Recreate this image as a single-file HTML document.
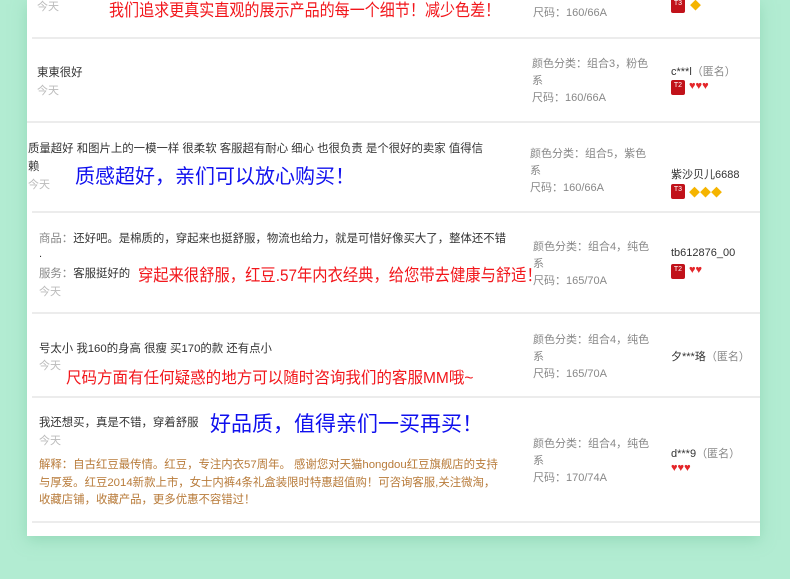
<!DOCTYPE html>
<html><head><meta charset="utf-8"><style>
body{margin:0;width:790px;height:579px;background:#b2ecd2;position:relative;overflow:hidden;font-family:"Liberation Sans","Noto Sans CJK SC",sans-serif;}
.panel{position:absolute;left:27px;top:0;width:733px;height:536px;background:#fff;box-shadow:0 4px 14px rgba(120,200,160,.5);}
.t{position:absolute;white-space:nowrap;font-size:11px;color:#333;}
.b{font-size:11.4px}
.g{color:#bbb;}
.m{color:#888;}
.hr{position:absolute;left:32px;width:728px;height:2px;background:#ececec;}
.big{position:absolute;white-space:nowrap;font-size:17px;transform-origin:left top;}
.red{color:#f2161b}.blue{color:#1010ee}
.tm{position:absolute;width:14px;height:15px;background:#c1121a;border-radius:2px;color:#fff;font-size:7px;text-align:center;line-height:12px;}
.h{position:absolute;font-size:11px;color:#e4262a;}
.d{position:absolute;font-size:11px;color:#f5b400;}
.o{color:#b87b3a}
</style></head><body>
<div class="panel"></div>
<div class="t g" style="left:37px;top:-2px">今天</div>
<div class="big red" style="left:109px;top:-4px;transform:scaleX(.885)">我们追求更真实直观的展示产品的每一个细节！减少色差！</div>
<div class="t m" style="left:533px;top:4px">尺码：160/66A</div>
<div class="tm" style="left:671px;top:-2px">T3</div><div class="d" style="left:690px;top:-3px">◆</div>
<div class="hr" style="top:37px"></div>

<div class="t b" style="left:37px;top:64px">東東很好</div>
<div class="t g" style="left:37px;top:82px">今天</div>
<div class="t m" style="left:532px;top:55px">颜色分类：组合3，粉色</div>
<div class="t m" style="left:532px;top:72px">系</div>
<div class="t m" style="left:532px;top:89px">尺码：160/66A</div>
<div class="t m" style="left:671px;top:63px"><span style="color:#333">c***l</span>（匿名）</div>
<div class="tm" style="left:671px;top:80px">T2</div><div class="h" style="left:689px;top:80px">♥♥♥</div>
<div class="hr" style="top:121px;left:27px;width:733px"></div>

<div class="t b" style="left:28px;top:140px">质量超好 和图片上的一模一样 很柔软 客服超有耐心 细心 也很负责 是个很好的卖家 值得信</div>
<div class="t b" style="left:28px;top:158px">赖</div>
<div class="t g" style="left:28px;top:176px">今天</div>
<div class="big blue" style="left:75px;top:160px;font-size:20px">质感超好，亲们可以放心购买！</div>
<div class="t m" style="left:530px;top:145px">颜色分类：组合5，紫色</div>
<div class="t m" style="left:530px;top:162px">系</div>
<div class="t m" style="left:530px;top:179px">尺码：160/66A</div>
<div class="t" style="left:671px;top:166px">紫沙贝儿6688</div>
<div class="tm" style="left:671px;top:184px">T3</div><div class="d" style="left:689px;top:184px">◆◆◆</div>
<div class="hr" style="top:211px"></div>

<div class="t m b" style="left:39px;top:230px">商品：<span style="color:#333">还好吧。是棉质的，穿起来也挺舒服，物流也给力，就是可惜好像买大了，整体还不错</span></div>
<div class="t" style="left:39px;top:248px">.</div>
<div class="t m b" style="left:39px;top:265px">服务：<span style="color:#333">客服挺好的</span></div>
<div class="t g" style="left:39px;top:283px">今天</div>
<div class="big red" style="left:138px;top:261px;transform:scaleX(.9)">穿起来很舒服，红豆.57年内衣经典，给您带去健康与舒适！</div>
<div class="t m" style="left:533px;top:238px">颜色分类：组合4，纯色</div>
<div class="t m" style="left:533px;top:255px">系</div>
<div class="t m" style="left:533px;top:272px">尺码：165/70A</div>
<div class="t" style="left:671px;top:247px">tb612876_00</div>
<div class="tm" style="left:671px;top:264px">T2</div><div class="h" style="left:689px;top:264px">♥♥</div>
<div class="hr" style="top:312px"></div>

<div class="t b" style="left:39px;top:340px">号太小 我160的身高 很瘦 买170的款 还有点小</div>
<div class="t g" style="left:39px;top:357px">今天</div>
<div class="big red" style="left:66px;top:364px;font-size:16px;transform:scaleX(.97)">尺码方面有任何疑惑的地方可以随时咨询我们的客服MM哦~</div>
<div class="t m" style="left:533px;top:331px">颜色分类：组合4，纯色</div>
<div class="t m" style="left:533px;top:348px">系</div>
<div class="t m" style="left:533px;top:365px">尺码：165/70A</div>
<div class="t m" style="left:671px;top:348px"><span style="color:#333">夕***珞</span>（匿名）</div>
<div class="hr" style="top:396px"></div>

<div class="t b" style="left:39px;top:414px">我还想买，真是不错，穿着舒服</div>
<div class="big blue" style="left:210px;top:408px;font-size:21px">好品质，值得亲们一买再买！</div>
<div class="t g" style="left:39px;top:432px">今天</div>
<div class="t o b" style="left:39px;top:456px">解释：自古红豆最传情。红豆，专注内衣57周年。 感谢您对天猫hongdou红豆旗舰店的支持</div>
<div class="t o b" style="left:39px;top:474px">与厚爱。红豆2014新款上市，女士内裤4条礼盒装限时特惠超值购！可咨询客服,关注微淘，</div>
<div class="t o b" style="left:39px;top:491px">收藏店铺，收藏产品，更多优惠不容错过！</div>
<div class="t m" style="left:533px;top:435px">颜色分类：组合4，纯色</div>
<div class="t m" style="left:533px;top:452px">系</div>
<div class="t m" style="left:533px;top:469px">尺码：170/74A</div>
<div class="t m" style="left:671px;top:445px"><span style="color:#333">d***9</span>（匿名）</div>
<div class="h" style="left:671px;top:462px">♥♥♥</div>
<div class="hr" style="top:521px"></div>
</body></html>
